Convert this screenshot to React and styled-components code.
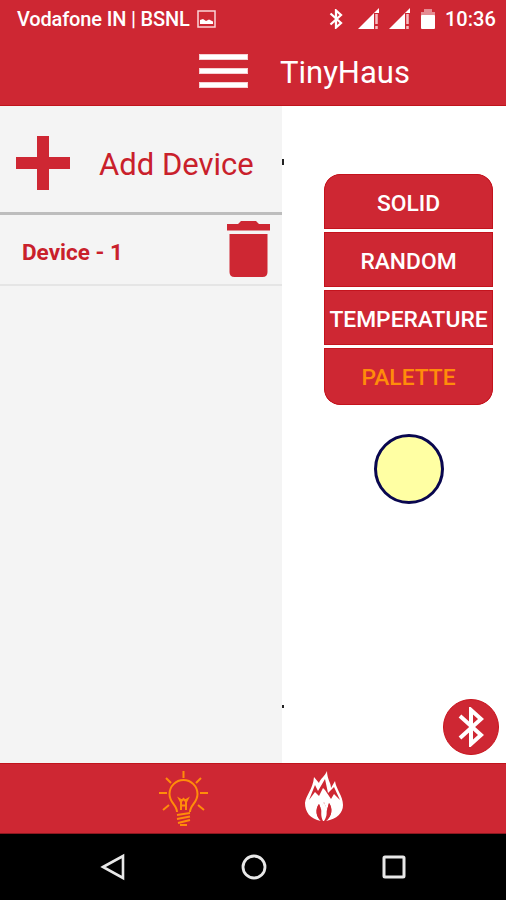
import React from "react";
import styled, { createGlobalStyle } from "styled-components";

const RED = "#ce2733";
const ORANGE = "#ff8c0a";

const Global = createGlobalStyle`
  * { box-sizing: border-box; }
  body { margin: 0; background: #000; font-family: Roboto, "Liberation Sans", sans-serif; }
  svg { display: block; flex: none; }
`;

const Screen = styled.div`
  width: 506px;
  height: 900px;
  display: flex;
  flex-direction: column;
  overflow: hidden;
  background: #fff;
`;

const Header = styled.header`
  height: 106px;
  flex: none;
  background: ${RED};
  border-bottom: 1px solid #c0141c;
  color: #fff;
`;

const StatusBar = styled.div`
  height: 38px;
  display: flex;
  justify-content: space-between;
  padding: 0 11px 0 17px;
`;

const StatusGroup = styled.div`
  display: flex;
  align-items: center;
`;

const StatusText = styled.span`
  display: block;
  width: ${(p) => p.$w}px;
  font-size: 20px;
  line-height: 38px;
  font-weight: 500;
  white-space: nowrap;
  letter-spacing: ${(p) => p.$ls || 0}px;
`;

const TitleBar = styled.div`
  height: 67px;
  display: flex;
  align-items: center;
  padding-left: 199px;
`;

const MenuButton = styled.button`
  border: 0;
  padding: 0;
  background: none;
  width: 49px;
  height: 35px;
  display: flex;
  flex-direction: column;
  gap: 8px;
`;

const MenuLine = styled.span`
  height: 6px;
  width: 49px;
  flex: none;
  background: #fff;
  border: 1px solid #f6d0d3;
`;

const Title = styled.h1`
  margin: 2px 0 0 32px;
  font-size: 31px;
  line-height: 66px;
  font-weight: 400;
`;

const Content = styled.main`
  height: 657px;
  flex: none;
  display: flex;
`;

const Drawer = styled.aside`
  width: 282px;
  background: #f4f4f4;
  color: #c9202b;
`;

const AddRow = styled.div`
  height: 109px;
  border-bottom: 3px solid #bdbdbd;
  display: flex;
  align-items: center;
  padding: 8px 0 0 16px;
`;

const AddLabel = styled.span`
  margin: 4px 0 0 29px;
  font-size: 31px;
  line-height: 40px;
  white-space: nowrap;
`;

const DeviceRow = styled.div`
  height: 71px;
  border-bottom: 2px solid #e5e5e5;
  display: flex;
  justify-content: space-between;
  align-items: flex-start;
  padding: 6px 12px 0 22px;
`;

const DeviceName = styled.span`
  font-size: 22.5px;
  line-height: 62px;
  font-weight: 700;
`;

const Panel = styled.section`
  flex: 1;
  position: relative;
  padding-top: 68px;
`;

const Speck = styled.i`
  position: absolute;
  left: 0;
  top: ${(p) => p.$top}px;
  width: 2px;
  height: ${(p) => p.$h}px;
  background: #222;
`;

const ModeList = styled.div`
  width: 169px;
  height: 231px;
  margin-left: 42px;
  border-radius: 16px;
  overflow: hidden;
  display: grid;
  grid-template-rows: 55px 55px 55px 57px;
  gap: 3px;
`;

const ModeButton = styled.button`
  border: 0;
  padding: ${(p) => (p.$active ? 2 : 4)}px 0 0;
  background: ${RED};
  box-shadow: inset 0 0 0 1px #c4131d;
  border-radius: ${(p) => p.$radius || "0"};
  color: ${(p) => (p.$active ? ORANGE : "#fff")};
  font: 500 22.8px Roboto, sans-serif;
  white-space: nowrap;
`;

const Swatch = styled.div`
  width: 70px;
  height: 70px;
  margin: 29px 0 0 92px;
  border: 3px solid #09074f;
  border-radius: 50%;
  background: #ffffa3;
`;

const BluetoothButton = styled.button`
  position: absolute;
  right: 7px;
  bottom: 8px;
  width: 56px;
  height: 56px;
  padding: 0;
  border: 1px solid #c8141d;
  border-radius: 50%;
  background: ${RED};
  display: grid;
  place-items: center;
`;

const TabBar = styled.nav`
  height: 71px;
  flex: none;
  background: ${RED};
  border-top: 1px solid #c0141c;
  border-bottom: 1px solid #8c1820;
  display: flex;
  padding: 6px 0 0 158px;
  gap: 94px;
`;

const SystemBar = styled.footer`
  flex: 1;
  background: #000;
  display: flex;
  justify-content: space-between;
  align-items: center;
  padding: 0 99px 0 100px;
`;

const Bluetooth = ({ w, h, sw }) => (
  <svg width={w} height={h} viewBox="0 0 26 40" fill="none" stroke="#fff" strokeWidth={sw}>
    <path d="M2 9 L23 28 L13 37 V3 L23 12 L2 31" />
  </svg>
);

const Picture = () => (
  <svg width="19" height="18" viewBox="0 0 19 18">
    <rect x="1" y="1" width="17" height="16" fill="none" stroke="#fbd5d8" strokeWidth="1.5" />
    <path d="M3 14V10L6 9L9 11L12 9.500L16 11.500V14Z" fill="#fff" />
  </svg>
);

const Signal = () => (
  <svg width="22" height="22" viewBox="0 0 22 22">
    <path d="M0 21L21 0V5H16V21Z" fill="#fff" />
    <path d="M18.5 6V16M18.5 18V21" stroke="#f6bec2" strokeWidth="2.5" />
  </svg>
);

const Battery = () => (
  <svg width="14" height="21" viewBox="0 0 14 21">
    <path d="M0 3H3V0H11V3H14V7H0Z" fill="#e58b92" />
    <rect y="6" width="14" height="14" rx="1" fill="#fff" />
  </svg>
);

const StatusIcons = styled(StatusGroup)`
  > svg:nth-of-type(1) { margin-right: 15px; }
  > svg:nth-of-type(2) { margin-right: 9px; }
  > svg:nth-of-type(3) { margin-right: 10px; }
  > svg:nth-of-type(4) { margin-right: 10px; }
`;

const CarrierGroup = styled(StatusGroup)`
  gap: 7px;
`;

const Plus = () => (
  <svg width="54" height="54" viewBox="0 0 54 54">
    <path d="M21 0H33V21H54V33H33V54H21V33H0V21H21Z" fill={RED} />
  </svg>
);

const Trash = () => (
  <svg width="43" height="57" viewBox="0 0 43 57" fill={RED}>
    <path d="M0 3H11L14 0H29L32 3H43V9.500H0Z" />
    <path d="M2.500 13H40.500V51Q40.500 56 35.500 56H7.500Q2.500 56 2.500 51Z" />
  </svg>
);

const Bulb = () => (
  <svg width="52" height="58" viewBox="158 769 52 58" fill="none" stroke={ORANGE} strokeWidth="2" strokeLinecap="butt">
    <path d="M177 811C177 804 169.500 802 169.500 793A14 14 0 0 1 197.500 793C197.500 802 190 804 190 811" />
    <path d="M183.500 770V777M166 777L171 782M201 777L196 782M159 792H167M200 792H208M163 809L169 804M204 809L198 804" />
    <path d="M181 809V801L179.500 798L182 799.500L183.500 798L185 799.500L187.500 798L186 801V809M180 804.500H187" strokeWidth="2" />
    <path d="M177 814L190 812M177 818L190 815.500M178 822L190 819M180 824H187" />
  </svg>
);

const Flame = () => (
  <svg width="40" height="52" viewBox="304 771 40 52">
    <path d="M321 822C310 820 305 813 305 804C306 796 313 790 314 778L319 784C320 780 325 777 327 772C327 780 331 784 331 789L335 782C336 790 343 797 343 806C343 814 337 820 326 822C332 817 333 809 329 804L327 811L324 803L321 810L319 805C315 810 316 818 321 822Z" fill="#fff" />
    <path d="M309 801L315 786L318 792L325 780L328 794L334 788L340 801L334 795L331 800L325 791L323 789L319 797L315 793Z" fill={RED} />
    <path d="M324 803C321 809 318 810 320 817L322 822H326L328 817C330 811 326 810 324 803Z" fill="#fff" />
    <path d="M319 805C315 810 316 818 321 822H323C320 816 322 813 321 810ZM329 804C333 810 332 817 326 822H324C328 816 326 813 327 811Z" fill={RED} />
  </svg>
);

export default function App() {
  return (
    <>
      <Global />
      <Screen>
        <Header>
          <StatusBar>
            <CarrierGroup>
              <StatusText $w={173} $ls={-0.16}>Vodafone IN | BSNL</StatusText>
              <Picture />
            </CarrierGroup>
            <StatusIcons>
              <Bluetooth w={14} h={20} sw={4.500} />
              <Signal />
              <Signal />
              <Battery />
              <StatusText $w={50}>10:36</StatusText>
            </StatusIcons>
          </StatusBar>
          <TitleBar>
            <MenuButton aria-label="Menu"><MenuLine /><MenuLine /><MenuLine /></MenuButton>
            <Title>TinyHaus</Title>
          </TitleBar>
        </Header>
        <Content>
          <Drawer>
            <AddRow><Plus /><AddLabel>Add Device</AddLabel></AddRow>
            <DeviceRow><DeviceName>Device - 1</DeviceName><Trash /></DeviceRow>
          </Drawer>
          <Panel>
            <Speck $top={53} $h={6} />
            <Speck $top={599} $h={3} />
            <ModeList>
              <ModeButton $radius="16px 16px 0 0">SOLID</ModeButton>
              <ModeButton>RANDOM</ModeButton>
              <ModeButton>TEMPERATURE</ModeButton>
              <ModeButton $active $radius="0 0 16px 16px">PALETTE</ModeButton>
            </ModeList>
            <Swatch />
            <BluetoothButton aria-label="Bluetooth"><Bluetooth w={26} h={40} sw={4} /></BluetoothButton>
          </Panel>
        </Content>
        <TabBar><Bulb /><Flame /></TabBar>
        <SystemBar>
          <svg width="26" height="28" viewBox="0 0 26 28" fill="none" stroke="#e8e8e8" strokeWidth="2.600"><path d="M3 14L23 3V25Z" /></svg>
          <svg width="26" height="26" viewBox="0 0 26 26" fill="none" stroke="#e8e8e8" strokeWidth="2.800"><circle cx="13" cy="13" r="11" /></svg>
          <svg width="26" height="26" viewBox="0 0 26 26" fill="none" stroke="#e8e8e8" strokeWidth="3"><rect x="3" y="3" width="20" height="20" rx="1" /></svg>
        </SystemBar>
      </Screen>
    </>
  );
}
